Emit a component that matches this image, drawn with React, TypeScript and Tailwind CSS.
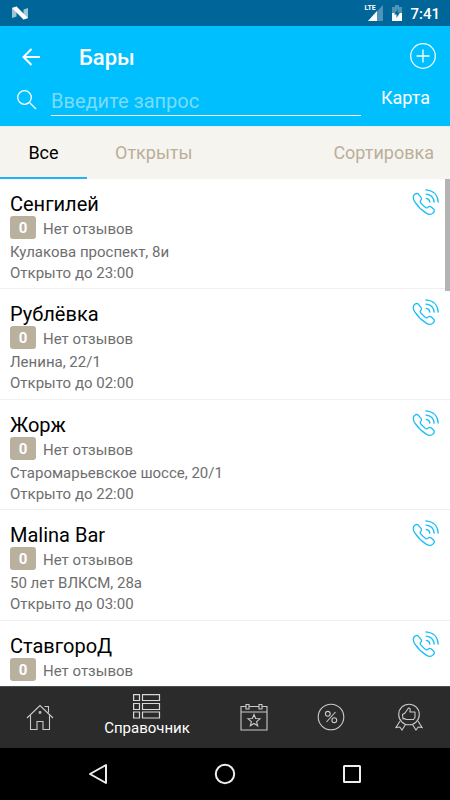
import React from 'react';

type Place = { name: string; address: string; until: string };

const places: Place[] = [
  { name: 'Сенгилей', address: 'Кулакова проспект, 8и', until: '23:00' },
  { name: 'Рублёвка', address: 'Ленина, 22/1', until: '02:00' },
  { name: 'Жорж', address: 'Старомарьевское шоссе, 20/1', until: '22:00' },
  { name: 'Malina Bar', address: '50 лет ВЛКСМ, 28а', until: '03:00' },
  { name: 'СтавгороД', address: '', until: '' },
];

function StatusBar() {
  return (
    <div className="flex h-[26px] shrink-0 items-center bg-[#006699] pl-3 pr-2.5 text-white">
      <svg width="16" height="14" viewBox="0 0 16 14" aria-hidden="true">
        <path d="M0 2 4.500 0.500V10.500L0 12ZM11.500 3.500 16 2V12L11.500 13.500Z" fill="#9fc3d7" />
        <path d="M0 2 4.500 0.500 16 12 11.500 13.500Z" fill="#fff" />
      </svg>
      <span className="flex-1" />
      <div className="relative">
        <svg width="20" height="16" viewBox="0 0 20 16" aria-hidden="true">
          <path d="M19 0V16H4Z" fill="#4d94b8" />
          <path d="M13 6V16H4Z" fill="#fff" />
        </svg>
        <span className="absolute left-0 top-0 bg-[#006699] text-[7px] font-bold leading-[7px]">LTE</span>
      </div>
      <svg className="ml-2" width="10" height="16" viewBox="0 0 10 16" aria-hidden="true">
        <path d="M3 0H7V2H10V9H0V2H3Z" fill="#4d94b8" />
        <path d="M0 8H10V16H0Z" fill="#fff" />
        <path d="M6 4 2 9.500H4.500V13L8 7.500H5.500Z" fill="#006699" />
      </svg>
      <span className="ml-2 pt-0.5 text-[15px] font-medium leading-5">7:41</span>
    </div>
  );
}

function Header() {
  return (
    <header className="h-[100px] shrink-0 bg-[#00bfff] text-white">
      <div className="flex h-[60px] items-center pl-[21px] pr-[14px]">
        <button aria-label="Назад" className="pt-0.5">
          <svg width="20" height="18" viewBox="0 0 20 18" fill="none" stroke="#fff" strokeWidth="2">
            <path d="M19 9H2.500M10.500 1 2.500 9 10.500 17" />
          </svg>
        </button>
        <h1 className="ml-[38px] flex-1 pt-1 text-[22px] font-medium leading-7">Бары</h1>
        <button aria-label="Добавить">
          <svg width="26" height="26" viewBox="0 0 26 26" fill="none" stroke="#fff">
            <circle cx="13" cy="13" r="12.300" strokeWidth="1.200" />
            <path d="M13 6.500V19.500M6.500 13H19.500" strokeWidth="1.300" />
          </svg>
        </button>
      </div>
      <div className="flex h-10 pl-[17px] pr-5">
        <label htmlFor="query" className="pt-1" aria-label="Поиск">
          <svg width="20" height="20" viewBox="0 0 20 20" fill="none" stroke="#fff" strokeWidth="1.300">
            <circle cx="7.500" cy="7.500" r="6.800" />
            <path d="M12.500 12.500 19 19" />
          </svg>
        </label>
        <input
          id="query"
          placeholder="Введите запрос"
          className="ml-[14px] h-[30px] min-w-0 flex-1 border-b border-white bg-transparent text-xl leading-6 outline-none placeholder:text-[#7adbfb]"
        />
        <button className="ml-5 h-6 text-lg leading-6">Карта</button>
      </div>
    </header>
  );
}

function Filters() {
  return (
    <nav className="flex h-[53px] shrink-0 border-t border-[#e3eeee] bg-[#f6f4ef] text-lg leading-[52px] text-[#b9af9b]">
      <button className="w-[87px] border-b-2 border-[#1fb4f8] text-black">Все</button>
      <button className="ml-7">Открыты</button>
      <button className="ml-auto pr-4">Сортировка</button>
    </nav>
  );
}

function PhoneIcon() {
  return (
    <svg width="27" height="27" viewBox="0 0 28 28" fill="none" stroke="#17bdf9" strokeWidth="1.300" strokeLinecap="round" strokeLinejoin="round">
      <path d="M2.200 6.200C3.500 4.600 5.200 4.300 6.500 5.300L9.300 8.600C10.300 10 9.900 11 8.800 12.100C8.200 12.900 8.500 13.700 9.300 14.700C10.800 16.500 12.400 18 14.100 19.200C15 19.800 15.800 19.700 16.400 19C17.600 17.800 18.700 17.700 20 18.700L22.300 20.700C23.600 22 23.300 23.400 22 24.700C19.900 27 17.400 26.700 14.700 25C9.900 22 5.900 18 2.900 13.400C1.100 10.500 0.400 8.400 2.200 6.200Z" />
      <path d="M14.800 9.800C17 10.200 18.200 11.500 18.500 13.600M14.600 5.300C19.500 5.800 22.500 8.700 23 13.600M14.400 1C21.900 1.500 26.700 6.200 27.200 13.600" />
    </svg>
  );
}

function PlaceRow({ place }: { place: Place }) {
  return (
    <li className="flex h-[110px] shrink-0 items-start justify-between border-b border-[#efefed] pl-2.5 pr-[11px] pt-2.5 even:h-[111px]">
      <div className="pt-[3px] text-[15px] leading-[21px] text-[#6e6e6e]">
        <h2 className="text-xl leading-6 text-black">{place.name}</h2>
        <div className="flex h-6">
          <span className="h-[23px] w-[26px] rounded-[3px] bg-[#b9b09e] text-center font-bold leading-6 text-white">0</span>
          <span className="ml-[7px] leading-[26px]">Нет отзывов</span>
        </div>
        {place.address && <p className="pt-0.5">{place.address}</p>}
        {place.until && <p>Открыто до {place.until}</p>}
      </div>
      <button aria-label={'Позвонить: ' + place.name}>
        <PhoneIcon />
      </button>
    </li>
  );
}

const iconProps = {
  width: 28,
  height: 28,
  viewBox: '0 0 28 28',
  fill: 'none',
  stroke: '#c9c9c9',
  strokeWidth: 1.1,
} as const;

function BottomTabs() {
  return (
    <nav className="flex h-[62px] shrink-0 items-center border-t border-[#45504f] bg-[#2b2b2b] pl-px">
      <button aria-label="Главная" className="flex w-[78px] justify-center pb-0.5">
        <svg {...iconProps}>
          <path d="M1 15 14 2.500 27 15M4.500 12.500V26.500H11V18.500H17V26.500H23.500V12.500M18.500 3.500H22.500V9.500" />
          <circle cx="14" cy="9.500" r="0.900" />
        </svg>
      </button>
      <button className="flex h-full w-[136px] flex-col items-center pt-[7px] text-white">
        <svg width="28" height="25" viewBox="0 0 28 25" fill="none" stroke="#d8d8d8" strokeWidth="1.200" aria-hidden="true">
          <path d="M0.600 0.600H6.500V6.500H0.600ZM9.500 0.600H26.500V6.500H9.500ZM0.600 9.500H6.500V15.500H0.600ZM9.500 9.500H26.500V15.500H9.500ZM0.600 18H6.500V24H0.600ZM9.500 18H26.500V24H9.500Z" />
        </svg>
        <span className="text-[15px] leading-[19px]">Справочник</span>
      </button>
      <button aria-label="События" className="flex w-[77px] justify-center pb-0.5">
        <svg {...iconProps}>
          <path d="M5.500 3.500H1V27H27V3.500H22.500M9.500 3.500H18.500M1 9H27M6 1.500H9V6H6ZM19 1.500H22V6H19Z" />
          <path d="M14 11.500 15.600 15.500 20 15.800 16.600 18.600 17.700 22.800 14 20.500 10.300 22.800 11.400 18.600 8 15.800 12.400 15.500Z" />
        </svg>
      </button>
      <button aria-label="Скидки" className="flex w-[78px] justify-center pb-0.5">
        <svg {...iconProps}>
          <circle cx="14" cy="14" r="12.800" />
          <circle cx="10.800" cy="10.800" r="2.400" />
          <circle cx="17.300" cy="17.200" r="2.400" />
          <path d="M18.500 9 9.500 19" />
        </svg>
      </button>
      <button aria-label="Рейтинг" className="flex w-[77px] justify-center pb-0.5">
        <svg {...iconProps}>
          <circle cx="14" cy="11.500" r="10.300" />
          <path d="M5 18 1 24.500 4.800 24 7 27 10.500 21.500M23 18 27 24.500 23.200 24 21 27 17.500 21.500" />
          <path d="M7.500 11.500 10 10 13.500 5C15.500 5 15.500 6.500 14.800 9H20V14.500L18.500 16.500H11L9.500 15.500 8 16Z" strokeLinejoin="round" />
        </svg>
      </button>
    </nav>
  );
}

function SystemNav() {
  return (
    <nav className="flex h-[52px] shrink-0 items-center justify-center gap-[106px] bg-black">
      <button aria-label="Назад в системе">
        <svg width="20" height="22" viewBox="0 0 20 22" fill="none" stroke="#eee" strokeWidth="2" strokeLinejoin="round">
          <path d="M18 2V20L2 11Z" />
        </svg>
      </button>
      <button aria-label="Домой">
        <svg width="22" height="22" viewBox="0 0 22 22" fill="none" stroke="#eee" strokeWidth="2">
          <circle cx="11" cy="11" r="9.200" />
        </svg>
      </button>
      <button aria-label="Обзор">
        <svg width="20" height="20" viewBox="0 0 20 20" fill="none" stroke="#eee" strokeWidth="2">
          <rect x="2" y="2" width="16" height="16" rx="0.500" />
        </svg>
      </button>
    </nav>
  );
}

export default function App() {
  return (
    <div className="flex h-screen flex-col overflow-hidden bg-white font-[Roboto,sans-serif]">
      <StatusBar />
      <Header />
      <Filters />
      <main className="relative min-h-0 flex-1 overflow-hidden">
        <ul className="flex flex-col">
          {places.map((p) => (
            <PlaceRow key={p.name} place={p} />
          ))}
        </ul>
        <div className="absolute right-0 top-0 h-28 w-[5px] bg-[#b3b3b3]" />
      </main>
      <BottomTabs />
      <SystemNav />
    </div>
  );
}
